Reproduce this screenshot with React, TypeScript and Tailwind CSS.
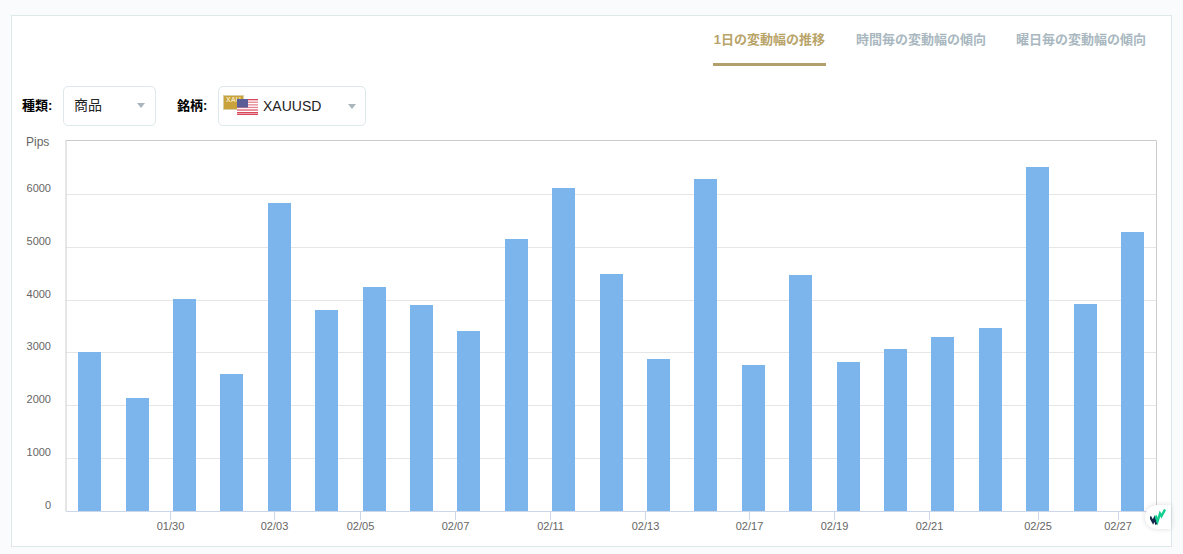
const FONT = "font-['Liberation_Sans','Noto_Sans_CJK_JP',sans-serif]";

// left edge and top edge of each bar, in page pixels
const bars = [
  [78, 352], [126, 398], [173, 299], [220, 374], [268, 203], [315, 310], [363, 287], [410, 305],
  [457, 331], [505, 239], [552, 188], [600, 274], [647, 359], [694, 179], [742, 365], [789, 275],
  [837, 362], [884, 349], [931, 337], [979, 328], [1026, 167], [1074, 304], [1121, 232],
];

const grid = [
  { y: 194, label: "6000" },
  { y: 247, label: "5000" },
  { y: 300, label: "4000" },
  { y: 352, label: "3000" },
  { y: 405, label: "2000" },
  { y: 458, label: "1000" },
];

const ticks = [
  { x: 170.5, label: "01/30" },
  { x: 274.5, label: "02/03" },
  { x: 360.5, label: "02/05" },
  { x: 455.5, label: "02/07" },
  { x: 550.5, label: "02/11" },
  { x: 645.5, label: "02/13" },
  { x: 749.5, label: "02/17" },
  { x: 834.5, label: "02/19" },
  { x: 929.5, label: "02/21" },
  { x: 1038, label: "02/25" },
  { x: 1118, label: "02/27" },
];

function Caret() {
  return (
    <svg width="8" height="5" viewBox="0 0 8 5" className="shrink-0">
      <path d="M0 0H8L4 5Z" fill="#a9b5bd" />
    </svg>
  );
}

function PairFlags() {
  return (
    <span className="relative h-[22px] w-[36px] shrink-0">
      <svg width="21" height="15" viewBox="0 0 21 15" className="absolute left-0 top-0">
        <rect width="21" height="15" fill="#c9a23c" />
        <rect x="0.5" y="0.5" width="20" height="14" fill="none" stroke="#d8cfa8" />
        <text x="3" y="7" fontSize="7" fontWeight="700" fill="#f4e6b8" fontFamily="Liberation Sans">XAU</text>
      </svg>
      <svg width="21" height="16" viewBox="0 0 21 16" className="absolute left-[14px] top-[4px]">
        <rect width="21" height="16" fill="#fff" />
        <rect y="0" width="21" height="1.3" fill="#d8475a" />
        <rect y="2.6" width="21" height="1.3" fill="#e58593" />
        <rect y="5.2" width="21" height="1.3" fill="#e58593" />
        <rect y="7.8" width="21" height="1.3" fill="#e58593" />
        <rect y="10.4" width="21" height="1.3" fill="#dc5a6b" />
        <rect y="13" width="21" height="1.3" fill="#d8475a" />
        <rect y="14.7" width="21" height="1.3" fill="#d8475a" />
        <rect width="11" height="8.5" fill="#5a5d96" />
      </svg>
    </span>
  );
}

function Chart() {
  return (
    <svg viewBox="12 130 1159 400" width="1159" height="400" className="mt-1 block">
      <g fontFamily="Liberation Sans" fontSize="11" fill="#666666">
        <text x="26" y="146" fontSize="12">Pips</text>
        <text x="51" y="509" textAnchor="end">0</text>
        {grid.map((g) => (
          <text key={g.label} x="51" y={g.y - 2} textAnchor="end">{g.label}</text>
        ))}
        {ticks.map((t) => (
          <text key={t.label} x={t.x} y="530" textAnchor="middle" dy="-0.5">{t.label}</text>
        ))}
      </g>
      {grid.map((g) => (
        <line key={g.y} x1="66" x2="1156" y1={g.y + 0.5} y2={g.y + 0.5} stroke="#e6e6e6" />
      ))}
      {bars.map(([x, top]) => (
        <rect key={x} x={x} y={top} width="23" height={511 - top} fill="#7cb5ec" />
      ))}
      <path d="M66 511V140.5H1156.5V511" fill="none" stroke="#cccccc" />
      <line x1="66" x2="1157" y1="511.5" y2="511.5" stroke="#ccd6eb" />
      {ticks.map((t) => (
        <line key={t.x} x1={Math.floor(t.x) + 0.5} x2={Math.floor(t.x) + 0.5} y1="512" y2="520" stroke="#ccd6eb" />
      ))}
    </svg>
  );
}

export default function App() {
  return (
    <div className={`min-h-[554px] overflow-hidden bg-[#f9fbfd] pt-[15px] ${FONT}`}>
      <div className="relative ml-[11px] w-[1161px] border border-[#dde8ea] bg-white pb-4">
        <div className="flex h-[50px] justify-end gap-[30px] pr-[25px] text-[13px] font-bold">
          <div className="flex h-full w-[113px] items-start justify-center border-b-[3px] border-[#b2a06c] pt-[14px] text-[#b8a368]">1日の変動幅の推移</div>
          <div className="flex h-full items-start pt-[14px] text-[#a9b8c0]">時間毎の変動幅の傾向</div>
          <div className="flex h-full items-start pt-[14px] text-[#a9b8c0]">曜日毎の変動幅の傾向</div>
        </div>

        <div className="mt-5 flex h-10 items-center pl-[10px]">
          <span className="w-[31px] whitespace-nowrap text-[13px] font-bold text-black">種類:</span>
          <div className="ml-[10px] flex h-10 w-[93px] items-center justify-between rounded-[5px] border border-[#dde8ea] px-[10px] pb-[2px] text-sm text-[#222222]">
            商品
            <Caret />
          </div>
          <span className="ml-[21px] w-[30px] whitespace-nowrap text-[13px] font-bold text-black">銘柄:</span>
          <div className="ml-[11px] flex h-10 w-[148px] items-center rounded-[5px] border border-[#dde8ea] pl-1 pr-[9px] text-sm text-[#222222]">
            <PairFlags />
            <span className="ml-[4px] flex-1">XAUUSD</span>
            <Caret />
          </div>
        </div>

        <Chart />

        <div className="absolute right-0 top-[489px] flex h-[24px] w-[26px] items-center justify-center rounded-l-full bg-white shadow-[0_0_5px_rgba(0,0,0,0.15)]">
          <svg width="16" height="17" viewBox="0 0 16 17" fill="none" strokeWidth="2.4">
            <path d="M0 7.5L3 13L4.5 9.5L6.5 15.5" stroke="#13294b" />
            <path d="M5.5 6.5L7.5 12.5L10 4.5L11.5 7L15 0.5" stroke="#12cf8e" />
          </svg>
        </div>
      </div>
    </div>
  );
}
